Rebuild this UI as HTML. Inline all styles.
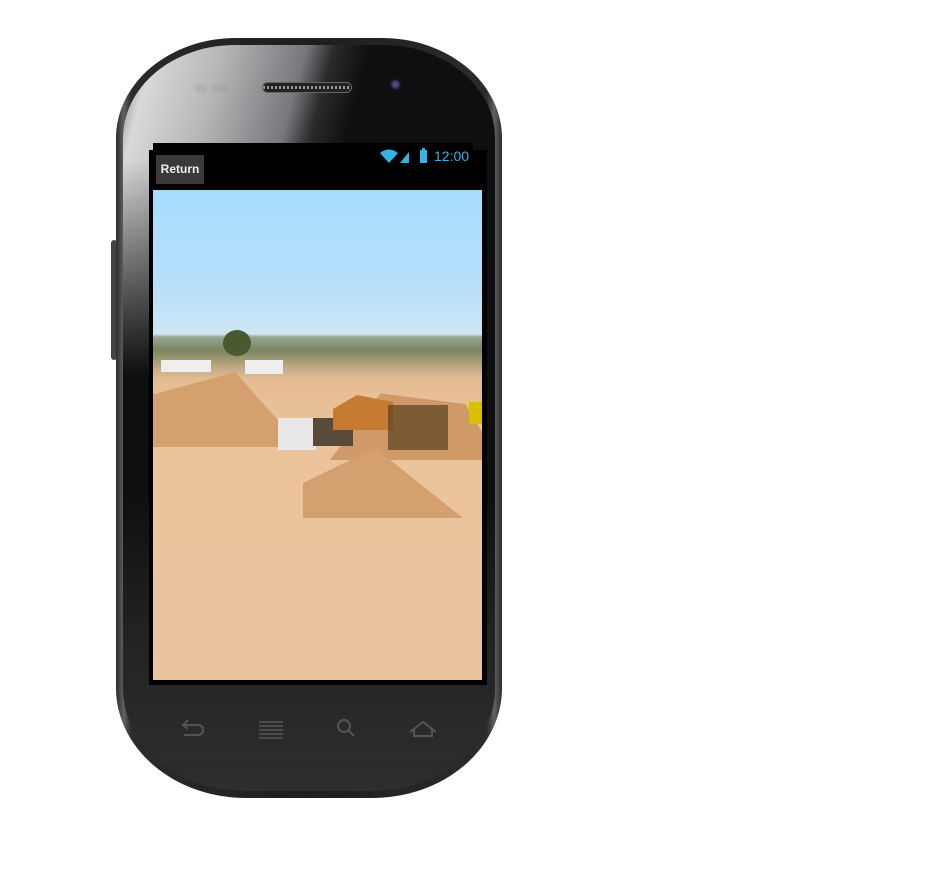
<!DOCTYPE html>
<html><head><style>
body{margin:0;width:940px;height:883px;background:#fff;position:relative;overflow:hidden;font-family:"Liberation Sans",sans-serif}
.ph{position:absolute;left:116px;top:38px;width:386px;height:760px;border-radius:120px 120px 130px 130px/100px 100px 110px 110px;background:linear-gradient(90deg,#2a2b2d,#606164 2%,#2a2b2d 4%,#1d1e20 50%,#2a2b2d 96%,#606164 98%,#2a2b2d);}
.in{position:absolute;left:7px;top:7px;right:7px;bottom:7px;border-radius:112px 112px 122px 122px/93px 93px 103px 103px;background:linear-gradient(#0e0f11 0,#0e0f11 60%,#222325 80%,#2d2e30 100%);overflow:hidden}
.gl{position:absolute;left:0;top:0;width:100%;height:330px;background:linear-gradient(105deg,#6f7073 0%,#d8d9db 7%,#b5b6b8 22%,#77787b 40%,#2a2b2d 46%,transparent 54%);-webkit-mask-image:linear-gradient(#000 0,#000 35%,transparent 100%);mask-image:linear-gradient(#000 0,#000 35%,transparent 100%)}
.side{position:absolute;left:111px;top:240px;width:6px;height:120px;background:#444;border-radius:3px}
</style></head><body>
<div class="side"></div>
<div class="ph"><div class="in"><div class="gl"></div></div></div>
<div style="position:absolute;left:262px;top:82px;width:90px;height:11px;border-radius:6px;background:#222;border:1px solid #666;box-sizing:border-box;background-image:repeating-linear-gradient(90deg,#999 0 2px,#222 2px 4px);background-size:auto 3px;background-repeat:repeat-x;background-position:0 3px"></div>
<div style="position:absolute;left:389px;top:78px;width:13px;height:13px;border-radius:50%;background:radial-gradient(#55408a 25%,#111 60%)"></div>
<div style="position:absolute;left:195px;top:84px;width:12px;height:9px;border-radius:5px;background:rgba(150,150,150,.25)"></div>
<div style="position:absolute;left:211px;top:84px;width:18px;height:9px;border-radius:5px;background:rgba(150,150,150,.25)"></div>
<div style="position:absolute;left:153px;top:143px;width:320px;height:20px;background:#000"></div>
<div style="position:absolute;left:149px;top:150px;width:338px;height:535px;background:#000"></div>
<div style="position:absolute;left:156px;top:155px;width:48px;height:29px;background:#3a3a3a;color:#eee;font-weight:bold;font-size:12px;line-height:29px;text-align:center">Return</div>
<svg style="position:absolute;left:378px;top:146px" width="60" height="18"><path d="M2 7 Q11 0 20 7 L11 17Z" fill="#33b5e5"/><path d="M22 17 L31 6 L31 17Z" fill="#33b5e5"/><rect x="42" y="4" width="7" height="13" fill="#33b5e5"/><rect x="44" y="2" width="3" height="2" fill="#33b5e5"/></svg>
<div style="position:absolute;left:434px;top:148px;color:#33b5e5;font-size:14px">12:00</div>
<div style="position:absolute;left:153px;top:190px;width:329px;height:490px;overflow:hidden;background:linear-gradient(#a6dcfd 0,#b8e0fa 100px,#cfe6f2 144px,#9aa595 147px,#7a8560 160px,#c9ae8a 180px,#e6bd93 190px,#ebc49c 260px,#eac39f 490px)">
<div style="position:absolute;left:70px;top:140px;width:28px;height:26px;border-radius:50%;background:#4a5a30"></div>
<div style="position:absolute;left:8px;top:170px;width:50px;height:12px;background:#eee"></div>
<div style="position:absolute;left:92px;top:170px;width:38px;height:14px;background:#eee"></div>
<div style="position:absolute;left:0;top:182px;width:150px;height:75px;background:#d3a06e;clip-path:polygon(0 100%,0 30%,55% 0,70% 35%,100% 100%)"></div>
<div style="position:absolute;left:160px;top:200px;width:169px;height:70px;background:#d09a68;clip-path:polygon(10% 100%,40% 5%,90% 20%,100% 60%,100% 100%)"></div>
<div style="position:absolute;left:125px;top:228px;width:38px;height:32px;background:#e8e8e8"></div>
<div style="position:absolute;left:160px;top:228px;width:40px;height:28px;background:#5a4a3a"></div>
<div style="position:absolute;left:180px;top:205px;width:60px;height:35px;background:#c47a30;clip-path:polygon(0 40%,40% 0,100% 20%,100% 100%,0 100%)"></div>
<div style="position:absolute;left:235px;top:215px;width:60px;height:45px;background:#5a4020;opacity:.7"></div>
<div style="position:absolute;left:150px;top:258px;width:160px;height:70px;background:#d4a070;clip-path:polygon(0 50%,45% 0,100% 100%,0 100%)"></div>
<div style="position:absolute;left:316px;top:212px;width:13px;height:22px;background:#d8c000"></div>
</div>
<svg style="position:absolute;left:170px;top:710px" width="280" height="40" fill="none" stroke="#555" stroke-width="2">
<path d="M14 15 H27 Q33 15 33 20 Q33 25 27 25 H14"/><path d="M18 10 L13 15 L18 19" />
<path d="M89 12 H113 M89 16 H113 M89 20 H113 M89 24 H113 M89 28 H113" stroke-width="1.5"/>
<circle cx="174" cy="16" r="6"/><path d="M178 20 L184 26"/>
<path d="M240 22 L253 12 L266 22 M244 20 V26 H262 V20"/>
</svg>
</body></html>
